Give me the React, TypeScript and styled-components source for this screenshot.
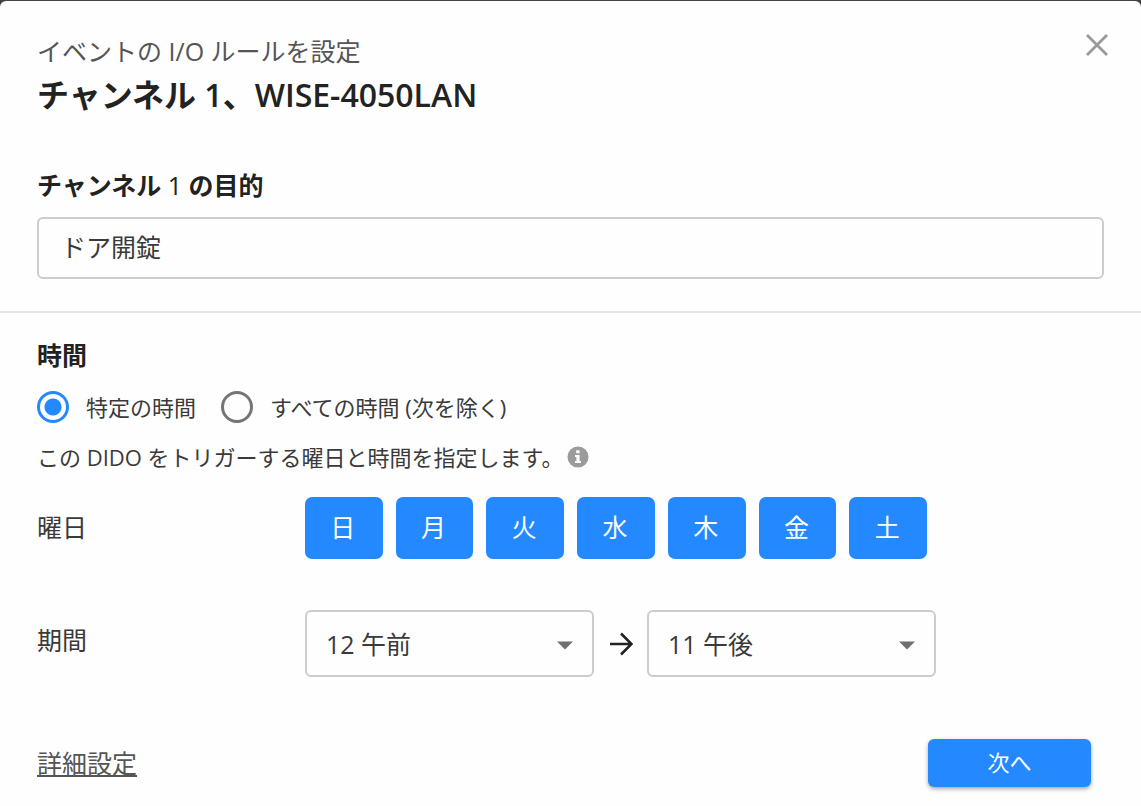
import React, { useState } from "react";
import styled, { createGlobalStyle } from "styled-components";

const GlobalStyle = createGlobalStyle`
  * { box-sizing: border-box; }
  body {
    margin: 0;
    background: #444244;
    color: #3a3a3a;
    font-family: "Open Sans", "Noto Sans CJK JP", sans-serif;
    font-size: 25px;
    line-height: 32px;
  }
  button, input, select { font: inherit; color: inherit; }
`;

const Dialog = styled.main`
  margin-top: 1px;
  min-height: calc(100vh - 1px);
  background: #fefefe;
  border-radius: 6px 6px 0 0;
`;

const Header = styled.header`
  display: flex;
  justify-content: space-between;
  align-items: flex-start;
  padding: 32px 32px 0 37px;
`;

const Heading = styled.div`
  padding-top: 2px;
`;

const Subtitle = styled.p`
  margin: 0;
  color: #555;
`;

const Title = styled.h1`
  margin: 0;
  font-size: 32px;
  line-height: 56px;
  font-weight: 600;
  color: #222;
`;

const CloseButton = styled.button`
  display: flex;
  padding: 0;
  border: 0;
  background: none;
  color: #999;
  cursor: pointer;
`;

const Purpose = styled.section`
  display: flex;
  flex-direction: column;
  gap: 16px;
  padding: 46px 37px 32px;
  border-bottom: 2px solid #e4e4e4;
`;

const PurposeLabel = styled.label`
  font-weight: 700;
  color: #222;
`;

const LabelNumber = styled.span`
  font-weight: 400;
`;

const TextInput = styled.input`
  width: 100%;
  height: 62px;
  padding: 0 22px 4px;
  border: 2px solid #ccc;
  border-radius: 6px;
  background: #fefefe;
  outline: none;
`;

const Schedule = styled.form`
  padding: 26px 38px 0 37px;
`;

const TimeFields = styled.fieldset`
  margin: 0;
  padding: 0;
  border: 0;
`;

const Legend = styled.legend`
  padding: 0;
  font-weight: 700;
  color: #222;
`;

const RadioRow = styled.div`
  display: flex;
  gap: 25px;
  padding-top: 20px;
`;

const RadioLabel = styled.label`
  display: flex;
  align-items: center;
  gap: 17px;
  font-size: 22px;
  line-height: 32px;
`;

const Radio = styled.input`
  appearance: none;
  width: 32px;
  height: 32px;
  margin: 0;
  border: 3px solid #757575;
  border-radius: 50%;
  &:checked {
    border-color: #2489ff;
    background: radial-gradient(circle, #2489ff 8px, transparent 9px);
  }
`;

const Hint = styled.p`
  display: flex;
  align-items: center;
  gap: 4px;
  margin: 18px 0 0;
  font-size: 22px;
`;

const Row = styled.div<{ $gap: number }>`
  display: grid;
  grid-template-columns: 268px 1fr;
  align-items: start;
  margin-top: ${(p) => p.$gap}px;
`;

const RowLabel = styled.span`
  padding-top: 14px;
`;

const Days = styled.div`
  display: grid;
  grid-template-columns: repeat(7, 1fr);
  gap: 13px;
  width: 100%;
  max-width: 622px;
`;

const DayButton = styled.button<{ $on: boolean }>`
  height: 62px;
  padding: 0 2px 2px 0;
  border: 0;
  border-radius: 7px;
  background: ${(p) => (p.$on ? "#2489ff" : "#e4e4e4")};
  color: ${(p) => (p.$on ? "#fff" : "#333")};
  cursor: pointer;
`;

const Period = styled.div`
  display: grid;
  grid-template-columns: 1fr 53px 1fr;
  align-items: center;
  justify-items: center;
  max-width: 631px;
`;

const SelectBox = styled.div`
  position: relative;
  width: 100%;
  & > svg {
    position: absolute;
    right: 21px;
    top: 50%;
    margin-top: -3px;
    pointer-events: none;
  }
`;

const Select = styled.select`
  appearance: none;
  display: block;
  width: 100%;
  height: 67px;
  padding: 0 48px 0 19px;
  border: 2px solid #ccc;
  border-radius: 6px;
  background: #fefefe;
`;

const Footer = styled.footer`
  display: flex;
  justify-content: space-between;
  align-items: center;
  padding: 62px 12px 18px 0;
`;

const AdvancedLink = styled.a`
  color: #555;
  text-decoration: underline;
  text-decoration-thickness: 2px;
  text-underline-offset: 2px;
`;

const NextButton = styled.button`
  width: 163px;
  height: 48px;
  padding: 0 0 2px;
  border: 0;
  border-radius: 6px;
  background: #2489ff;
  color: #fff;
  font-size: 22px;
  box-shadow: 0 2px 4px rgba(0, 0, 0, 0.35);
  cursor: pointer;
`;

const DAYS = ["日", "月", "火", "水", "木", "金", "土"];

function HourSelect({ label, value }: { label: string; value: string }) {
  return (
    <SelectBox>
      <Select aria-label={label} defaultValue={value}>
        <option>{value}</option>
      </Select>
      <svg width="16" height="9" viewBox="0 0 16 9" aria-hidden="true">
        <path d="M0 0.5h16L8 8.5z" fill="#6f6f6f" />
      </svg>
    </SelectBox>
  );
}

export default function App() {
  const [selected, setSelected] = useState<string[]>(DAYS);
  const toggle = (day: string) =>
    setSelected((s) => (s.includes(day) ? s.filter((d) => d !== day) : [...s, day]));

  return (
    <>
      <GlobalStyle />
      <Dialog lang="ja">
        <Header>
          <Heading>
            <Subtitle>イベントの I/O ルールを設定</Subtitle>
            <Title>チャンネル 1、WISE-4050LAN</Title>
          </Heading>
          <CloseButton type="button" aria-label="閉じる">
            <svg width="24" height="24" viewBox="0 0 24 24" fill="none" stroke="currentColor" strokeWidth="2.8">
              <path d="M2 2l20 20M22 2L2 22" />
            </svg>
          </CloseButton>
        </Header>

        <Purpose>
          <PurposeLabel htmlFor="purpose">
            チャンネル <LabelNumber>1</LabelNumber> の目的
          </PurposeLabel>
          <TextInput id="purpose" type="text" defaultValue="ドア開錠" />
        </Purpose>

        <Schedule onSubmit={(e) => e.preventDefault()}>
          <TimeFields>
            <Legend>時間</Legend>
            <RadioRow>
              <RadioLabel>
                <Radio type="radio" name="time" defaultChecked />
                特定の時間
              </RadioLabel>
              <RadioLabel>
                <Radio type="radio" name="time" />
                すべての時間 (次を除く)
              </RadioLabel>
            </RadioRow>
          </TimeFields>
          <Hint>
            この DIDO をトリガーする曜日と時間を指定します。
            <svg width="22" height="22" viewBox="0 0 22 22" aria-hidden="true">
              <circle cx="11" cy="11" r="10.5" fill="#9b9b9b" />
              <path d="M9.2 4.2h3.4v3H9.2zM8 9h4.6v6H14v2H8v-2h1.4v-4H8z" fill="#fefefe" />
            </svg>
          </Hint>

          <Row $gap={24}>
            <RowLabel>曜日</RowLabel>
            <Days role="group" aria-label="曜日">
              {DAYS.map((day) => (
                <DayButton
                  key={day}
                  type="button"
                  $on={selected.includes(day)}
                  aria-pressed={selected.includes(day)}
                  onClick={() => toggle(day)}
                >
                  {day}
                </DayButton>
              ))}
            </Days>
          </Row>

          <Row $gap={51}>
            <RowLabel>期間</RowLabel>
            <Period>
              <HourSelect label="開始時刻" value="12 午前" />
              <svg width="24" height="24" viewBox="0 0 24 24" fill="none" stroke="#222" strokeWidth="2.6" aria-hidden="true">
                <path d="M1 12h21M12 1.5L22.5 12L12 22.5" />
              </svg>
              <HourSelect label="終了時刻" value="11 午後" />
            </Period>
          </Row>

          <Footer>
            <AdvancedLink href="#advanced">詳細設定</AdvancedLink>
            <NextButton type="submit">次へ</NextButton>
          </Footer>
        </Schedule>
      </Dialog>
    </>
  );
}
